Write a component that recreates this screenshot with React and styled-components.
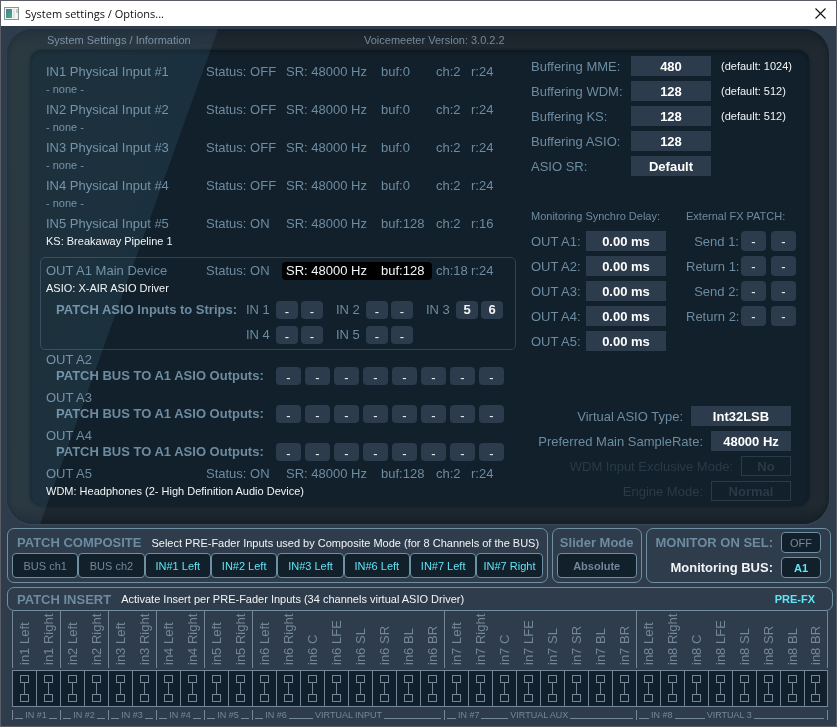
import React from "react";
import styled, { createGlobalStyle, css } from "styled-components";

const color = {
  frame: "#2e3c4b",
  screen: "#11202a",
  field: "#2d3c4d",
  text: "#6d8ba1",
  line: "#6f8fa3",
  muted: "#74879a",
  dim: "#2a3a48",
  cyan: "#5fe6f6",
  white: "#f2f4f6",
};

const GlobalStyle = createGlobalStyle`
  *, *::before, *::after { box-sizing: border-box; }
  body {
    margin: 0;
    background: #2b2e36;
    font-family: "Liberation Sans", Arial, sans-serif;
    font-size: 13px;
    color: ${color.text};
  }
  button { font: inherit; color: inherit; margin: 0; padding: 0; border: 0; background: none; white-space: nowrap; }
  h1, h2, p { margin: 0; font: inherit; }
`;

const Window = styled.main`
  border: 1px solid #5b5d66;
  background: ${color.frame};
  overflow: hidden;
`;

const TitleBar = styled.header`
  display: flex;
  align-items: center;
  height: 25px;
  padding: 0 10px 0 3px;
  gap: 6px;
  background: #fff;
  color: #101010;
`;

const WindowTitle = styled.h1`
  flex: 1;
  font-family: "Open Sans", "Noto Sans", sans-serif;
  font-size: 11px;
  line-height: 24px;
`;

const CloseButton = styled.button`
  display: flex;
  color: #111;
`;

const Client = styled.div`
  display: flex;
  flex-direction: column;
  gap: 4px;
  padding: 3px 3px 6px 6px;
`;

const Bezel = styled.section`
  position: relative;
  overflow: hidden;
  margin-right: 4px;
  padding: 0 20px 18px 23px;
  border-radius: 26px;
  background: linear-gradient(#1a222b, #1f292f 4%, #1f292f 96%, #18212a);
  box-shadow: inset 0 0 4px 1px #151e27, 0 1px 2px #3b4c5b;

  &::after {
    content: "";
    position: absolute;
    inset: 0;
    pointer-events: none;
    mix-blend-mode: screen;
    background: linear-gradient(100deg, #0e1416, #0b1218 22%, #050a0e 32%);
    clip-path: polygon(0 0, 211px 0, 33px 100%, 0 100%);
  }
`;

const BezelHeader = styled.div`
  display: grid;
  grid-template-columns: 317px 1fr;
  padding-left: 17px;
  height: 21px;
  font-size: 11px;
  line-height: 23px;
  color: #75899b;
`;

const Screen = styled.div`
  display: grid;
  grid-template-columns: 476px minmax(265px, 1fr);
  column-gap: 15px;
  padding: 6px 12px 5px 10px;
  border-radius: 12px;
  background: ${color.screen};
  box-shadow: 0 0 3px #0d171f, inset 0 2px 3px #0d1820;
`;

const Devices = styled.div`
  padding-top: 7px;
`;

const Device = styled.div`
  padding: 0 6px;
  margin-bottom: ${(p) => p.$gap || 0}px;
`;

const MainDevice = styled(Device)`
  border: 1px solid #2e4252;
  border-radius: 5px;
  padding: 4px 5px 5px;
  margin-top: 6px;
`;

const DeviceLine = styled.div`
  display: grid;
  grid-template-columns: 160px 76px 150px auto auto;
  justify-content: start;
  line-height: ${(p) => (p.$short ? 17 : 18)}px;
  height: ${(p) => (p.$short ? 16 : 18)}px;
  white-space: nowrap;
`;

const Format = styled.span`
  display: grid;
  grid-template-columns: 95px auto;
  padding-left: 4px;
  border-radius: 4px;
  ${(p) => p.$active && css`background: #000; color: ${color.white};`}
`;

const Channels = styled.span`
  padding-left: 4px;
  width: 39px;
`;

const DeviceNote = styled.p`
  height: 18px;
  line-height: 17px;
  font-size: 11px;
  color: ${(p) => (p.$active ? color.white : color.text)};
`;

const PatchInputs = styled.div`
  display: grid;
  grid-template-columns: 177px 77px 77px 77px;
  column-gap: 13px;
  row-gap: 7px;
  padding: 3px 0 0 10px;
`;

const PatchTitle = styled.span`
  grid-row: ${(p) => (p.$tall ? "1 / 3" : "auto")};
  font-weight: bold;
  line-height: 18px;
  white-space: nowrap;
`;

const StripPatch = styled.div`
  display: grid;
  grid-template-columns: 27px 22px 22px;
  column-gap: 3px;
  line-height: 18px;
  white-space: nowrap;
`;

const PatchOutputs = styled.div`
  display: grid;
  grid-template-columns: 216px repeat(8, 25px);
  column-gap: 4px;
  padding-left: 10px;
`;

const PatchButton = styled.button`
  height: ${(p) => (p.$tall ? 20 : 18)}px;
  padding-top: ${(p) => (p.$set ? 0 : 2)}px;
  border-radius: 4px;
  background: ${color.field};
  color: ${color.white};
  font-weight: ${(p) => (p.$set ? "bold" : "normal")};
  line-height: 18px;
`;

const Settings = styled.div`
  display: flex;
  flex-direction: column;
`;

const FieldList = styled.div`
  display: grid;
  grid-template-columns: ${(p) => p.$columns};
  grid-auto-rows: 20px;
  gap: 5px;
  align-items: center;
  justify-content: start;
`;

const Label = styled.label`
  white-space: nowrap;
`;

const PatchLabel = styled.span`
  margin-right: -3px;
  text-align: right;
  white-space: nowrap;
`;

const ValueButton = styled.button`
  width: ${(p) => p.$width || 80}px;
  height: 20px;
  background: ${color.field};
  color: #fff;
  font-weight: bold;
  &:disabled { background: none; border: 1px solid ${color.dim}; color: ${color.dim}; }
`;

const DefaultNote = styled.span`
  padding-left: 5px;
  font-size: 11px;
  color: ${color.white};
`;

const SettingsColumns = styled.div`
  display: grid;
  grid-template-columns: 155px auto;
  justify-content: start;
  margin-top: 31px;
`;

const ColumnTitle = styled.h2`
  height: 24px;
  line-height: 18px;
  font-size: 11px;
  white-space: nowrap;
`;

const ModeList = styled.div`
  display: flex;
  flex-direction: column;
  align-items: flex-end;
  gap: 5px;
  margin-top: auto;
  padding-right: 6px;
`;

const ModeRow = styled.div`
  display: flex;
  align-items: center;
  gap: 8px;
  color: ${(p) => (p.$off ? color.dim : color.text)};
`;

const Panels = styled.div`
  display: grid;
  grid-template-columns: minmax(540px, 540fr) minmax(90px, 90fr) minmax(185px, 185fr);
  column-gap: 4px;
  margin-right: 2px;
`;

const Panel = styled.section`
  border: 1px solid ${color.line};
  border-radius: 7px;
  padding: 3px 4px 4px;
`;

const PanelHead = styled.div`
  display: flex;
  align-items: center;
  gap: 10px;
  height: 21px;
  padding: 0 ${(p) => (p.$center ? 0 : 5)}px;
  white-space: nowrap;
  justify-content: ${(p) => (p.$center ? "center" : "flex-start")};
`;

const PanelTitle = styled.h2`
  font-weight: bold;
`;

const Hint = styled.p`
  font-size: 11px;
  color: ${color.white};
`;

const Segments = styled.div`
  display: grid;
  grid-template-columns: repeat(8, 1fr);
`;

const DarkButton = styled.button`
  height: ${(p) => p.$height || 25}px;
  width: 100%;
  border: 1px solid ${color.line};
  border-radius: 4px;
  background: ${color.screen};
  font-size: 11px;
  font-weight: ${(p) => (p.$bold ? "bold" : "normal")};
  color: ${(p) => (p.$on ? color.cyan : color.muted)};
`;

const MonitorPanel = styled(Panel)`
  display: grid;
  grid-template-columns: 1fr 40px;
  align-items: center;
  gap: 4px 8px;
  padding: 3px 9px 4px 8px;
  font-weight: bold;
`;

const MonitorLabel = styled(Label)`
  text-align: right;
  color: ${(p) => (p.$on ? color.white : color.text)};
`;

const InsertPanel = styled(Panel)`
  display: flex;
  align-items: center;
  justify-content: space-between;
  height: 24px;
  padding: 0 17px 0 4px;
`;

const PreFx = styled.button`
  font-size: 11px;
  font-weight: bold;
  color: ${color.cyan};
`;

const InsertMatrix = styled.div`
  display: grid;
  grid-template-columns: repeat(34, minmax(0, 1fr));
  margin: -4px 5px 0 5px;
`;

const StripLabel = styled.label`
  display: flex;
  justify-content: center;
  height: 57px;
  margin-bottom: 2px;
  border-left: 1px solid ${(p) => (p.$first ? color.muted : "transparent")};
  border-right: ${(p) => (p.$last ? `1px solid ${color.muted}` : 0)};
  color: ${color.muted};
`;

const VerticalText = styled.span`
  writing-mode: vertical-rl;
  transform: rotate(180deg);
  height: 54px;
  line-height: 18px;
  white-space: nowrap;
`;

const InsertButton = styled.button`
  display: flex;
  align-items: center;
  justify-content: center;
  height: 37px;
  border: 1px solid ${color.muted};
  border-right-width: ${(p) => (p.$last ? 1 : 0)}px;
  background: ${color.screen};
  color: ${color.muted};
`;

const GroupLabel = styled.div`
  grid-column: span ${(p) => p.$span};
  display: flex;
  align-items: flex-end;
  gap: 2px;
  height: 10px;
  margin-top: 3px;
  padding: 0 3px 0 2px;
  border-left: 1px solid ${color.muted};
  border-right: ${(p) => (p.$last ? `1px solid ${color.muted}` : 0)};
  font-size: 9px;
  line-height: 9px;
  white-space: nowrap;
  color: ${color.muted};
`;

const Rule = styled.i`
  flex: ${(p) => p.$grow} 1 0;
  height: 1px;
  margin-bottom: 1px;
  background: ${color.muted};
`;

const AppIcon = () => (
  <svg width="15" height="14" viewBox="0 0 15 14" aria-hidden="true">
    <defs>
      <linearGradient id="app-icon-fill" x1="0" y1="0" x2="1" y2="1">
        <stop offset="0" stopColor="#3f7fa0" />
        <stop offset="1" stopColor="#4fae70" />
      </linearGradient>
    </defs>
    <rect x="0.5" y="0.5" width="14" height="12" fill="#f3f5f6" stroke="#8d9295" />
    <rect x="2" y="2" width="6" height="9" fill="url(#app-icon-fill)" />
    <rect x="9" y="2" width="2" height="9" fill="#dfe7ea" />
    <rect x="12" y="2" width="2" height="4" fill="#b8d3cf" />
  </svg>
);

const CloseIcon = () => (
  <svg width="11" height="11" viewBox="0 0 11 11" aria-hidden="true">
    <path d="M0.5 0.5 L10.5 10.5 M10.5 0.5 L0.5 10.5" stroke="currentColor" strokeWidth="1.1" />
  </svg>
);

const InsertIcon = () => (
  <svg width="10" height="28" viewBox="0 0 10 28" fill="none" stroke="currentColor" shapeRendering="crispEdges" aria-hidden="true">
    <rect x="0.5" y="0.5" width="8" height="7" />
    <path d="M4.5 7.5 V19.5" />
    <rect x="0.5" y="19.5" width="8" height="7" />
  </svg>
);

const inputs = [
  { name: "IN1 Physical Input #1", status: "OFF", buf: "0", rate: "24" },
  { name: "IN2 Physical Input #2", status: "OFF", buf: "0", rate: "24" },
  { name: "IN3 Physical Input #3", status: "OFF", buf: "0", rate: "24" },
  { name: "IN4 Physical Input #4", status: "OFF", buf: "0", rate: "24" },
  { name: "IN5 Physical Input #5", status: "ON", buf: "128", rate: "16", device: "KS: Breakaway Pipeline 1" },
];

const stripPatches = [
  ["IN 1", "-", "-"],
  ["IN 2", "-", "-"],
  ["IN 3", "5", "6"],
  ["IN 4", "-", "-"],
  ["IN 5", "-", "-"],
];

const buffering = [
  ["Buffering MME:", "480", "(default: 1024)"],
  ["Buffering WDM:", "128", "(default: 512)"],
  ["Buffering KS:", "128", "(default: 512)"],
  ["Buffering ASIO:", "128", ""],
  ["ASIO SR:", "Default", ""],
];

const modes = [
  { label: "Virtual ASIO Type:", value: "Int32LSB", width: 100 },
  { label: "Preferred Main SampleRate:", value: "48000 Hz", width: 80 },
  { label: "WDM Input Exclusive Mode:", value: "No", width: 50, off: true },
  { label: "Engine Mode:", value: "Normal", width: 80, off: true },
];

const composite = ["BUS ch1", "BUS ch2", "IN#1 Left", "IN#2 Left", "IN#3 Left", "IN#6 Left", "IN#7 Left", "IN#7 Right"];

const stereo = ["Left", "Right"];
const surround = ["Left", "Right", "C", "LFE", "SL", "SR", "BL", "BR"];
const groups = [
  ...[1, 2, 3, 4, 5].map((n) => ({ n, channels: stereo })),
  { n: 6, channels: surround, title: "VIRTUAL INPUT" },
  { n: 7, channels: surround, title: "VIRTUAL AUX" },
  { n: 8, channels: surround, title: "VIRTUAL 3" },
];
const strips = groups.flatMap((g) =>
  g.channels.map((channel, i) => ({ name: `in${g.n} ${channel}`, first: i === 0 }))
);

function StatusLine({ name, status, buf, channels = "2", rate, active }) {
  return (
    <DeviceLine>
      <span>{name}</span>
      <span>Status: {status}</span>
      <Format $active={active}>
        <span>SR: 48000 Hz</span>
        <span>buf:{buf}</span>
      </Format>
      <Channels>ch:{channels}</Channels>
      <span>r:{rate}</span>
    </DeviceLine>
  );
}

function BusPatch({ name }) {
  return (
    <Device $gap={4}>
      <DeviceLine $short>{name}</DeviceLine>
      <PatchOutputs>
        <PatchTitle>PATCH BUS TO A1 ASIO Outputs:</PatchTitle>
        {surround.map((channel, i) => (
          <PatchButton key={channel} aria-label={`${name} output ${i + 1}`}>-</PatchButton>
        ))}
      </PatchOutputs>
    </Device>
  );
}

export default function App() {
  return (
    <Window>
      <GlobalStyle />
      <TitleBar>
        <AppIcon />
        <WindowTitle>System settings / Options...</WindowTitle>
        <CloseButton aria-label="Close"><CloseIcon /></CloseButton>
      </TitleBar>

      <Client>
        <Bezel>
          <BezelHeader>
            <span>System Settings / Information</span>
            <span>Voicemeeter Version: 3.0.2.2</span>
          </BezelHeader>
          <Screen>
            <Devices>
              {inputs.map((input) => (
                <Device key={input.name} $gap={2}>
                  <StatusLine {...input} />
                  <DeviceNote $active={Boolean(input.device)}>{input.device || "- none -"}</DeviceNote>
                </Device>
              ))}

              <MainDevice $gap={1}>
                <StatusLine name="OUT A1 Main Device" status="ON" buf="128" channels="18" rate="24" active />
                <DeviceNote $active>ASIO: X-AIR ASIO Driver</DeviceNote>
                <PatchInputs>
                  <PatchTitle $tall>PATCH ASIO Inputs to Strips:</PatchTitle>
                  {stripPatches.map(([strip, left, right]) => (
                    <StripPatch key={strip}>
                      <span>{strip}</span>
                      <PatchButton $set={left !== "-"} aria-label={`${strip} left`}>{left}</PatchButton>
                      <PatchButton $set={right !== "-"} aria-label={`${strip} right`}>{right}</PatchButton>
                    </StripPatch>
                  ))}
                </PatchInputs>
              </MainDevice>

              <BusPatch name="OUT A2" />
              <BusPatch name="OUT A3" />
              <BusPatch name="OUT A4" />
              <Device>
                <StatusLine name="OUT A5" status="ON" buf="128" rate="24" />
                <DeviceNote $active>WDM: Headphones (2- High Definition Audio Device)</DeviceNote>
              </Device>
            </Devices>

            <Settings>
              <FieldList $columns="95px 80px auto">
                {buffering.map(([label, value, note], i) => (
                  <React.Fragment key={label}>
                    <Label htmlFor={`buffer-${i}`}>{label}</Label>
                    <ValueButton id={`buffer-${i}`}>{value}</ValueButton>
                    <DefaultNote>{note}</DefaultNote>
                  </React.Fragment>
                ))}
              </FieldList>

              <SettingsColumns>
                <div>
                  <ColumnTitle>Monitoring Synchro Delay:</ColumnTitle>
                  <FieldList $columns="50px 80px">
                    {[1, 2, 3, 4, 5].map((n) => (
                      <React.Fragment key={n}>
                        <Label htmlFor={`delay-${n}`}>OUT A{n}:</Label>
                        <ValueButton id={`delay-${n}`}>0.00 ms</ValueButton>
                      </React.Fragment>
                    ))}
                  </FieldList>
                </div>
                <div>
                  <ColumnTitle>External FX PATCH:</ColumnTitle>
                  <FieldList $columns="50px 25px 25px">
                    {["Send 1:", "Return 1:", "Send 2:", "Return 2:"].map((name) => (
                      <React.Fragment key={name}>
                        <PatchLabel>{name}</PatchLabel>
                        <PatchButton $tall aria-label={`${name} left`}>-</PatchButton>
                        <PatchButton $tall aria-label={`${name} right`}>-</PatchButton>
                      </React.Fragment>
                    ))}
                  </FieldList>
                </div>
              </SettingsColumns>

              <ModeList>
                {modes.map((mode, i) => (
                  <ModeRow key={mode.label} $off={mode.off}>
                    <Label htmlFor={`mode-${i}`}>{mode.label}</Label>
                    <ValueButton id={`mode-${i}`} $width={mode.width} disabled={mode.off}>{mode.value}</ValueButton>
                  </ModeRow>
                ))}
              </ModeList>
            </Settings>
          </Screen>
        </Bezel>

        <Panels>
          <Panel>
            <PanelHead>
              <PanelTitle>PATCH COMPOSITE</PanelTitle>
              <Hint>Select PRE-Fader Inputs used by Composite Mode (for 8 Channels of the BUS)</Hint>
            </PanelHead>
            <Segments>
              {composite.map((name, i) => (
                <DarkButton key={name} $on={i > 1}>{name}</DarkButton>
              ))}
            </Segments>
          </Panel>
          <Panel>
            <PanelHead $center>
              <PanelTitle>Slider Mode</PanelTitle>
            </PanelHead>
            <DarkButton $bold>Absolute</DarkButton>
          </Panel>
          <MonitorPanel>
            <MonitorLabel htmlFor="monitor-sel">MONITOR ON SEL:</MonitorLabel>
            <DarkButton id="monitor-sel" $height={21}>OFF</DarkButton>
            <MonitorLabel htmlFor="monitor-bus" $on>Monitoring BUS:</MonitorLabel>
            <DarkButton id="monitor-bus" $height={21} $bold $on>A1</DarkButton>
          </MonitorPanel>
        </Panels>

        <InsertPanel>
          <PanelHead>
            <PanelTitle>PATCH INSERT</PanelTitle>
            <Hint>Activate Insert per PRE-Fader Inputs (34 channels virtual ASIO Driver)</Hint>
          </PanelHead>
          <PreFx>PRE-FX</PreFx>
        </InsertPanel>

        <InsertMatrix>
          {strips.map((strip, i) => (
            <StripLabel key={strip.name} htmlFor={`insert-${i}`} $first={strip.first} $last={i === strips.length - 1}>
              <VerticalText>{strip.name}</VerticalText>
            </StripLabel>
          ))}
          {strips.map((strip, i) => (
            <InsertButton key={strip.name} id={`insert-${i}`} $last={i === strips.length - 1}>
              <InsertIcon />
            </InsertButton>
          ))}
          {groups.map((group) => (
            <GroupLabel key={group.n} $span={group.channels.length} $last={group.n === 8}>
              <Rule $grow={1} />
              <span>IN #{group.n}</span>
              <Rule $grow={group.title ? 3 : 1} />
              {group.title && (
                <>
                  <span>{group.title}</span>
                  <Rule $grow={7} />
                </>
              )}
            </GroupLabel>
          ))}
        </InsertMatrix>
      </Client>
    </Window>
  );
}
